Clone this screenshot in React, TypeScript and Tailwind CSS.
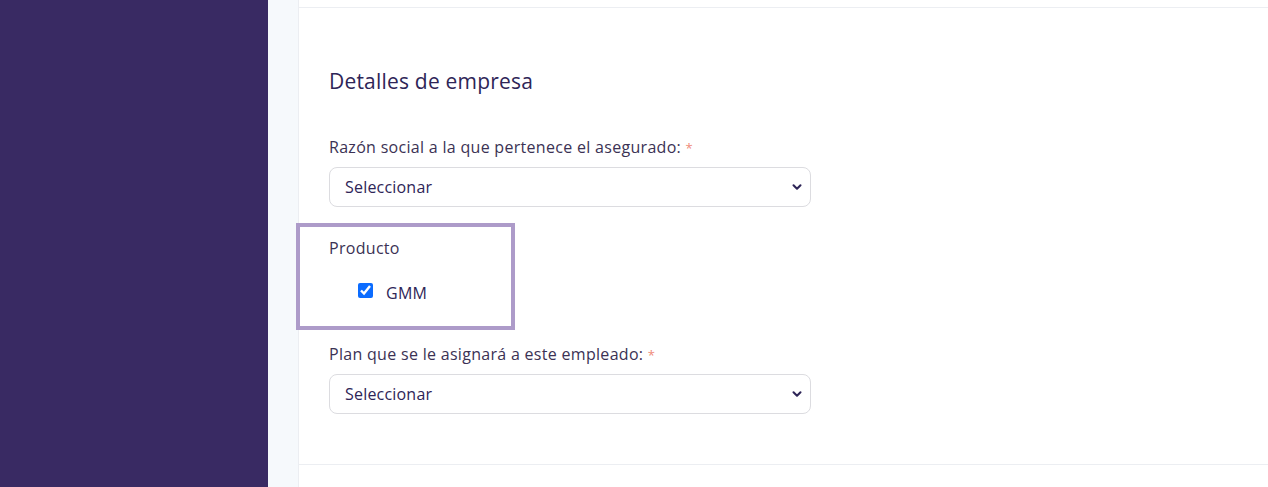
import { ChevronDown } from 'lucide-react'

function SelectField({ label }: { label: string }) {
  return (
    <div>
      <label className="block text-[16px] leading-5 tracking-[0.3px] text-[#3b3254]">
        {label} <span className="text-[13px] text-[#ef8a78]">*</span>
      </label>
      <div className="relative mt-[9px] flex h-10 w-[482px] items-center rounded-lg border border-[#dcdce0] bg-white pl-[15px] pr-[6px]">
        <span className="flex-1 text-[16px] tracking-[0.2px] text-[#2e2557]">Seleccionar</span>
        <ChevronDown size={14} strokeWidth={3.5} className="text-[#2e2557]" />
      </div>
    </div>
  )
}

export default function App() {
  return (
    <div className="flex h-[487px] w-full overflow-hidden" style={{ fontFamily: '"Open Sans", Lato, sans-serif' }}>
      <aside className="w-[268px] flex-shrink-0 bg-[#392a63]" />
      <div className="w-[30px] flex-shrink-0 bg-[#f6f9fc]" />
      <main className="flex-1 border-l border-[#eceef2] bg-white">
        <div className="h-[8px] border-b border-[#eceef2]" />
        <section className="border-b border-[#eceef2] pb-[50px] pt-[59px]">
          <h2 className="pl-[30px] text-[21px] leading-7 tracking-[0.2px] text-[#2e2557]">Detalles de empresa</h2>

          <div className="mt-[42px] pl-[30px]">
            <SelectField label="Razón social a la que pertenece el asegurado:" />
          </div>

          <div className="-ml-[3px] mt-4 w-[219px] border-4 border-[#ad9bc9] pb-[23px] pl-[29px] pt-[11px]">
            <p className="text-[16px] leading-5 tracking-[0.3px] text-[#3b3254]">Producto</p>
            <label className="mt-[22px] flex items-start gap-[13px] pl-[29px]">
              <input type="checkbox" defaultChecked className="mt-[3px] h-[15px] w-[15px] accent-[#0b6cff]" />
              <span className="mt-[3px] text-[16px] leading-5 tracking-[0.3px] text-[#2e2557]">GMM</span>
            </label>
          </div>

          <div className="mt-[14px] pl-[30px]">
            <SelectField label="Plan que se le asignará a este empleado:" />
          </div>
        </section>
      </main>
    </div>
  )
}
